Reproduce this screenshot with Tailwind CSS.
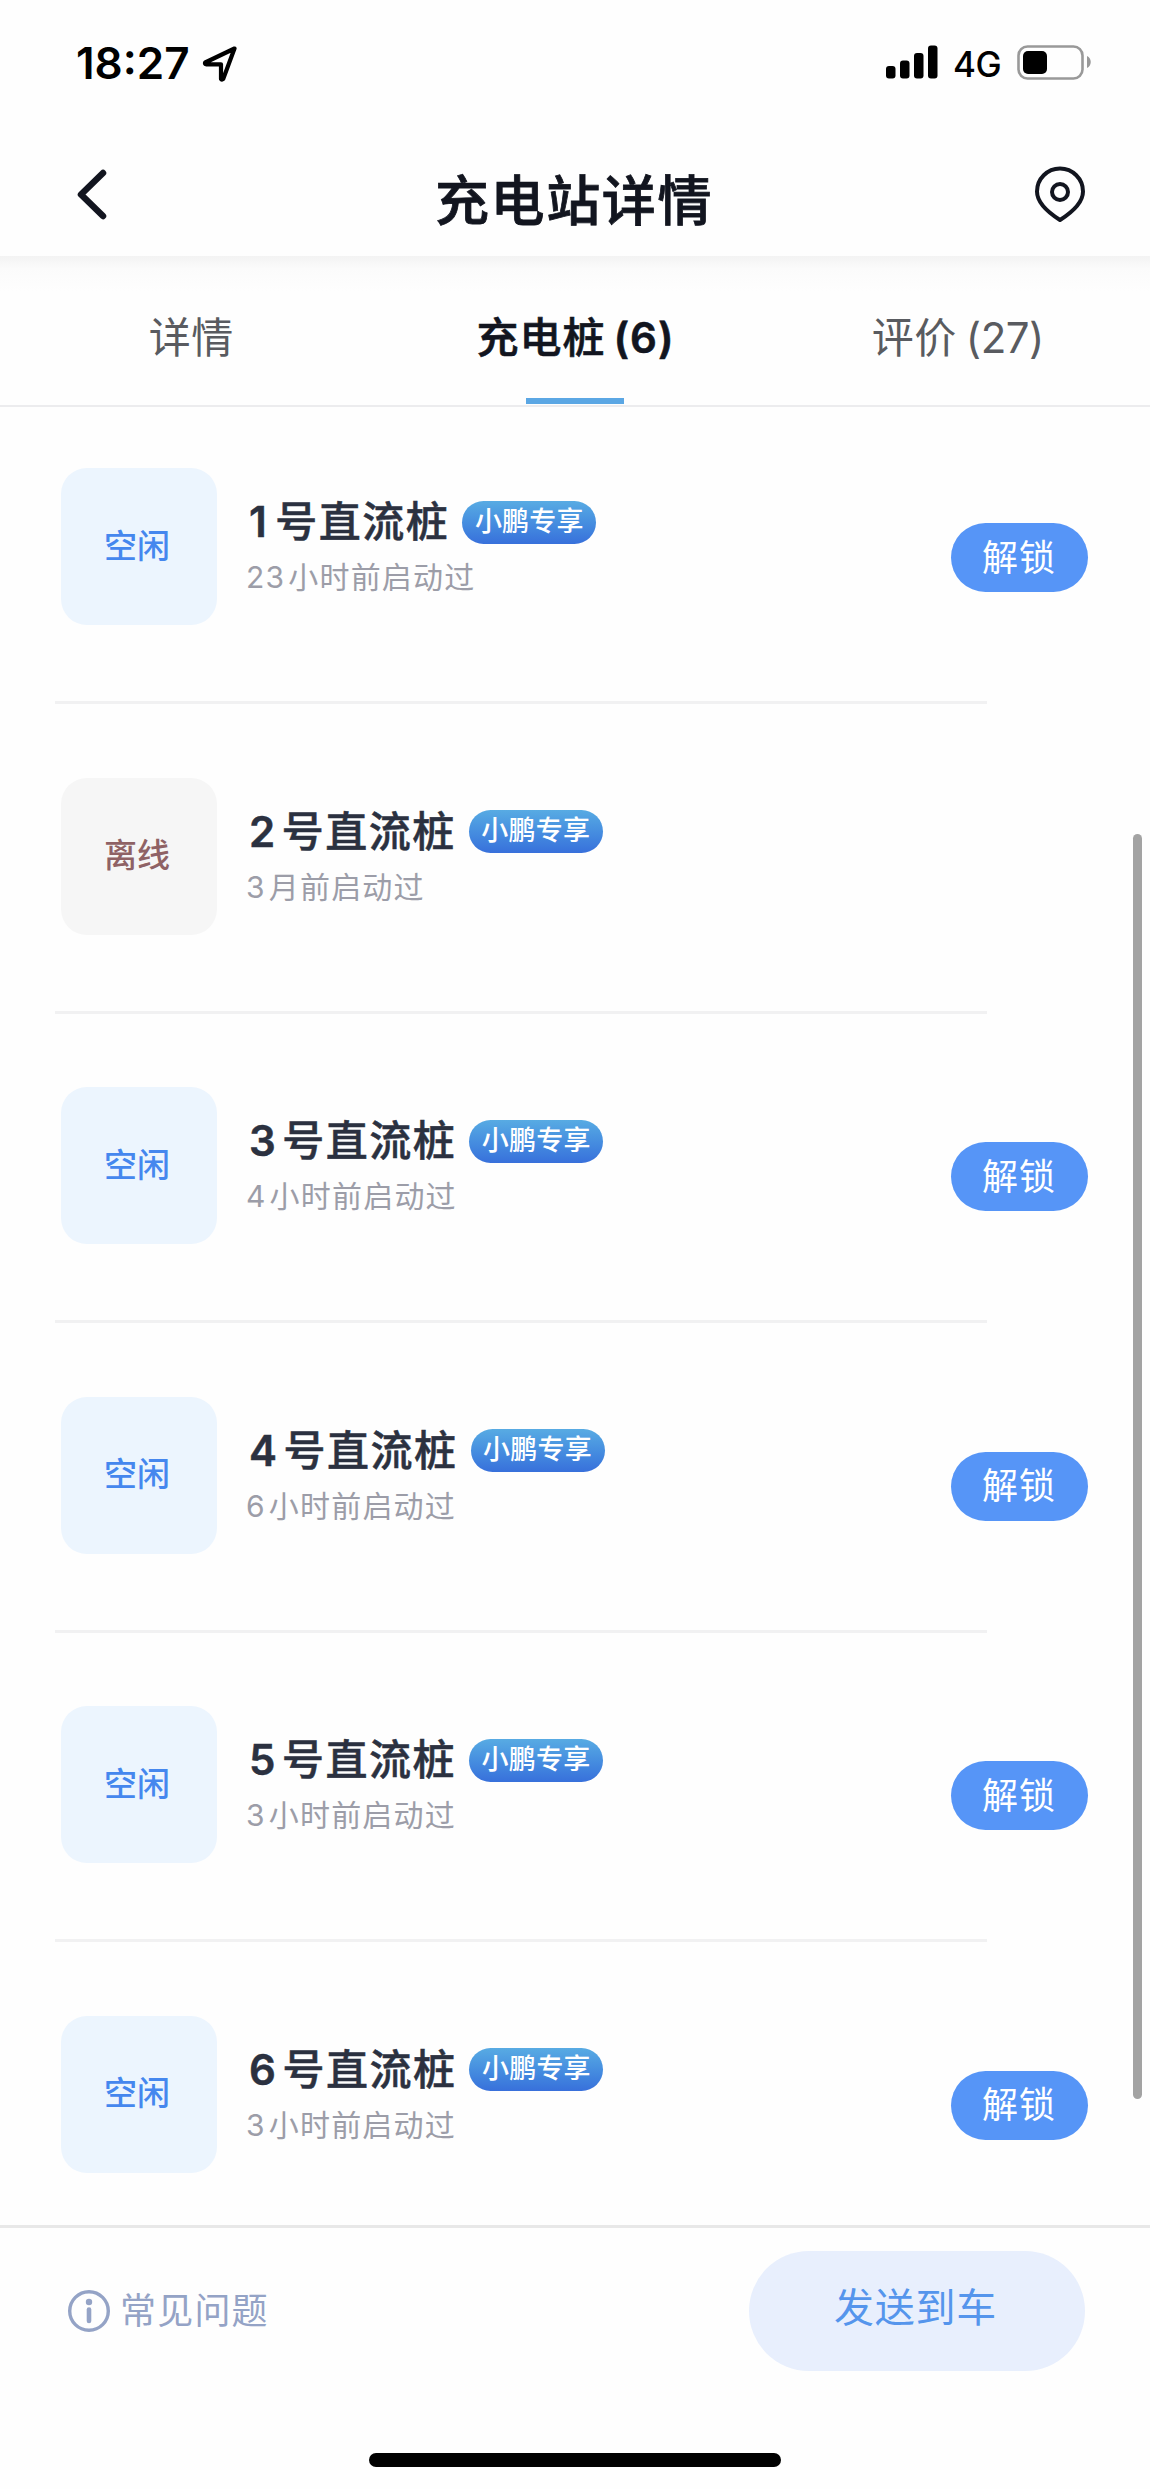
<!DOCTYPE html>
<html lang="zh-CN">
<head>
<meta charset="utf-8">
<title>充电站详情</title>
<script src="https://cdn.jsdelivr.net/npm/@tailwindcss/browser@4"></script>
</head>
<body class="bg-[#fefefe]">
<div class="relative flex h-[2489px] w-[1150px] flex-col overflow-hidden bg-[#fefefe] font-['Inter','Noto_Sans_CJK_SC',sans-serif] whitespace-nowrap">
  <!-- status bar -->
  <div class="flex h-[126px] shrink-0 items-center justify-between pr-[58px] pl-[76px] text-black">
    <div class="flex items-center gap-[12px]">
      <span class="w-[114px] text-[44px] leading-none font-semibold">18:27</span>
      <svg class="h-[37px] w-[36px]" viewBox="0 0 36 37" fill="none" stroke="#000" stroke-width="4.2" stroke-linejoin="round" stroke-linecap="round"><path d="M32.500 3.500 L3.200 17.500 Q2.500 19 4 19.300 L19 19.300 L19 34 Q20 35 21.200 34 Z"/></svg>
    </div>
    <div class="flex items-center">
      <svg class="h-[36px] w-[52px]" viewBox="0 0 52 36"><rect x="0" y="21" width="9.5" height="12.5" rx="3"/><rect x="14" y="15.5" width="9.5" height="18" rx="3"/><rect x="28" y="8" width="9.5" height="25.5" rx="3"/><rect x="42" y="0.5" width="9.5" height="33" rx="3"/></svg>
      <span class="mt-[2px] ml-[15px] w-[50px] text-[35px] leading-none font-medium tracking-[-0.5px]">4G</span>
      <svg class="ml-[13px] h-[36px] w-[76px]" viewBox="-1 0 76 36"><rect x="1.500" y="1.500" width="64" height="32" rx="9" fill="none" stroke="#999" stroke-width="2.600"/><rect x="6" y="6" width="24" height="23" rx="5"/><path d="M70 11 C75 13 75 21 70 23 Z" fill="#999"/></svg>
    </div>
  </div>
  <!-- navigation header -->
  <header class="flex h-[130px] shrink-0 items-start justify-between pr-[64px] pl-[76px]">
    <svg class="mt-[41px] h-[54px] w-[38px]" viewBox="0 0 38 54" fill="none" stroke="#12151f" stroke-width="6.500" stroke-linecap="round" stroke-linejoin="round"><path d="M27 6 L5 27.500 L27 49"/></svg>
    <h1 class="mt-[36px] text-[54px] leading-[80px] font-medium tracking-[1.600px] text-[#12151f] [-webkit-text-stroke:0.8px_#12151f]">充电站详情</h1>
    <svg class="mt-[40px] h-[58px] w-[52px]" viewBox="0 0 52 58" fill="none" stroke="#12151f" stroke-width="4"><path d="M26 54 C15 47 3 37 3 25.500 A23 23 0 0 1 49 25.500 C49 37 37 47 26 54 Z" stroke-linejoin="round"/><circle cx="26" cy="26" r="8"/></svg>
  </header>
  <!-- tabs -->
  <nav class="relative flex h-[151px] shrink-0 border-b-2 border-[#ececee] text-[42px] leading-[60px] text-[#595b60]">
    <div class="absolute inset-x-0 top-0 h-[36px] bg-linear-to-b from-[#f3f3f3] via-[#fbfbfb] via-35% to-[#fefefe]"></div>
    <div class="relative flex-1 pt-[52px] pr-[2px] text-center tracking-[0.5px]">详情</div>
    <div class="relative flex flex-1 flex-col items-center justify-between pt-[52px] pb-px font-medium text-[#12151f]"><span class="tracking-[1px] [-webkit-text-stroke:0.6px_#12151f]">充电桩<b class="ml-[8px] font-semibold">(6)</b></span><i class="h-[6px] w-[98px] bg-[#5ba7e4]"></i></div>
    <div class="relative flex-1 pt-[52px] pr-px text-center"><span class="tracking-[0.5px]">评价</span><span class="ml-[9px] tracking-[-0.5px]">(27)</span></div>
  </nav>
  <!-- charger list -->
  <main id="list" class="flex h-[1818px] shrink-0 flex-col overflow-hidden"></main>
  <!-- footer -->
  <footer class="flex h-[228px] shrink-0 items-start justify-between border-t-3 border-[#e8e8e8] pt-[23px] pr-[65px] pl-[67px]">
    <div class="mt-[36px] flex items-center text-[36px] leading-[48px] tracking-[1.200px] text-[#94a3c6]">
      <svg class="mr-[9px] h-[44px] w-[44px]" viewBox="0 0 44 44" fill="none" stroke="#94a3c6"><circle cx="22" cy="22" r="19.300" stroke-width="3.400"/><path d="M22 20.500 V32" stroke-width="4.600" stroke-linecap="round"/><circle cx="22" cy="13" r="3.200" fill="#94a3c6" stroke="none"/></svg>
      <span>常见问题</span>
    </div>
    <button class="h-[120px] w-[336px] rounded-full bg-[#e8effd] pr-[3px] pb-[6px] text-[40px] leading-[60px] tracking-[0.800px] text-[#5595ec]">发送到车</button>
  </footer>
  <div class="absolute bottom-[22px] left-[369px] h-[14px] w-[412px] rounded-full bg-black"></div>
  <div class="absolute top-[834px] left-[1133px] h-[1265px] w-[9px] rounded-full bg-[#a3a3a3]"></div>
</div>
<script>
const rows = [[1,'23','小时前启动过'],[2,'3','月前启动过'],[3,'4','小时前启动过'],[4,'6','小时前启动过'],[5,'3','小时前启动过'],[6,'3','小时前启动过']];
document.getElementById('list').innerHTML = rows.map(([n, num, txt]) => {
  const off = n === 2;
  return `<section class="relative flex h-[309.5px] shrink-0 items-start pt-[61px] pl-[61px]">
    <div class="flex h-[157px] w-[156px] items-center justify-center rounded-[26px] text-[33px] font-medium pr-[4px] ${off ? 'bg-[#f6f6f6] text-[#8f6265]' : 'bg-[#ecf5fe] text-[#4587ee]'}">${off ? '离线' : '空闲'}</div>
    <div class="ml-[29px] pt-[24px]">
      <div class="flex h-[60px] items-center text-[42px] leading-[60px] font-medium tracking-[1.5px] text-[#2b3140] [-webkit-text-stroke:0.5px_#2b3140]"><span class="ml-[3px] font-semibold">${n}</span><span class="${n === 1 ? 'ml-[7px]' : 'ml-[5px]'}">号直流桩</span>
        <span class="ml-[13px] flex h-[43px] w-[134px] items-center justify-center rounded-full bg-linear-to-b from-[#58abe3] to-[#3870db] pb-[2px] text-[27px] leading-none tracking-[0.200px] text-white [-webkit-text-stroke:0px]">小鹏专享</span></div>
      <div class="mt-px text-[30px] leading-[48px] tracking-[1.200px] text-[#9c9da8]"><span>${num}</span><span class="ml-[3px]">${txt}</span></div>
    </div>
    ${off ? '' : '<button class="mt-[55px] mr-[62px] ml-auto h-[69px] w-[137px] rounded-full bg-[#5695f7] pr-px text-[36px] leading-[50px] tracking-[1px] text-white">解锁</button>'}
    ${n < 6 ? '<div class="absolute top-[294px] left-[55px] h-[3px] w-[932px] bg-[#f1f1f2]"></div>' : ''}
  </section>`;
}).join('');
</script>
</body>
</html>
